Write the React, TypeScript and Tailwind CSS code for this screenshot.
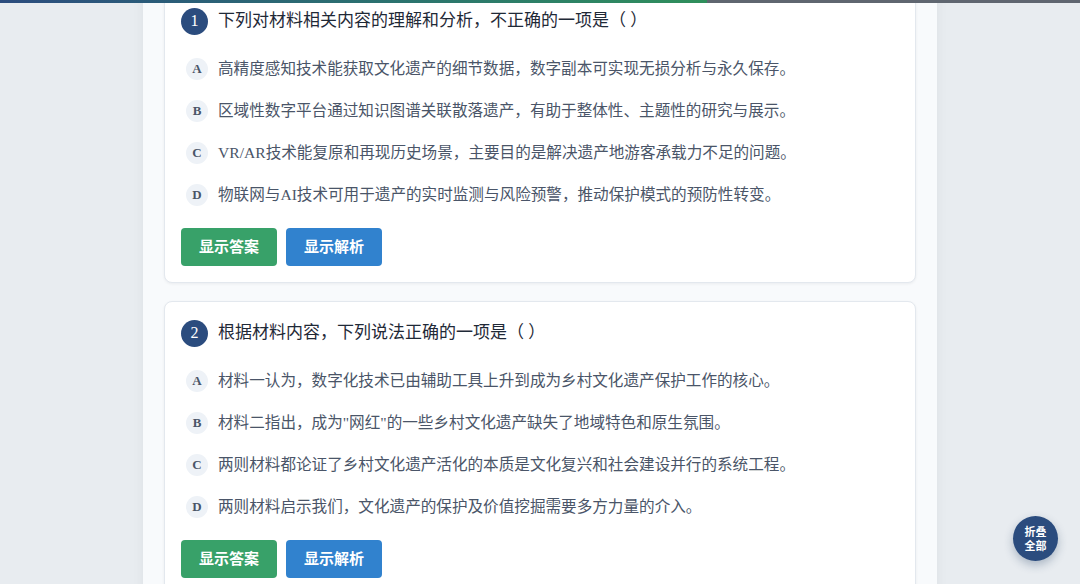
import React from "react";

type Question = {
  no: number;
  title: string;
  options: { key: string; text: string }[];
};

const questions: Question[] = [
  {
    no: 1,
    title: "下列对材料相关内容的理解和分析，不正确的一项是（ ）",
    options: [
      { key: "A", text: "高精度感知技术能获取文化遗产的细节数据，数字副本可实现无损分析与永久保存。" },
      { key: "B", text: "区域性数字平台通过知识图谱关联散落遗产，有助于整体性、主题性的研究与展示。" },
      { key: "C", text: "VR/AR技术能复原和再现历史场景，主要目的是解决遗产地游客承载力不足的问题。" },
      { key: "D", text: "物联网与AI技术可用于遗产的实时监测与风险预警，推动保护模式的预防性转变。" },
    ],
  },
  {
    no: 2,
    title: "根据材料内容，下列说法正确的一项是（ ）",
    options: [
      { key: "A", text: "材料一认为，数字化技术已由辅助工具上升到成为乡村文化遗产保护工作的核心。" },
      { key: "B", text: "材料二指出，成为\"网红\"的一些乡村文化遗产缺失了地域特色和原生氛围。" },
      { key: "C", text: "两则材料都论证了乡村文化遗产活化的本质是文化复兴和社会建设并行的系统工程。" },
      { key: "D", text: "两则材料启示我们，文化遗产的保护及价值挖掘需要多方力量的介入。" },
    ],
  },
];

const serif = "font-['Liberation_Serif','Noto_Sans_CJK_SC',serif]";
const sans = "font-['Liberation_Sans','Noto_Sans_CJK_SC',sans-serif]";

function QuestionCard({ q }: { q: Question }) {
  return (
    <div className="bg-white rounded-lg border border-[#e3e8ee] shadow-[0_1px_3px_rgba(15,23,42,0.06)] p-[16px]">
      <div className="flex items-center gap-[10px] h-[30px]">
        <span className={`w-[27px] h-[27px] rounded-full bg-[#2b4c7e] text-white flex items-center justify-center text-[16px] ${serif}`}>
          {q.no}
        </span>
        <h3 className={`text-[17px] text-[#1f2937] ${serif}`}>{q.title}</h3>
      </div>
      <div className="mt-[12px] flex flex-col">
        {q.options.map((o) => (
          <div key={o.key} className="h-[42px] flex items-center gap-[10px] pl-[5px]">
            <span className={`w-[22px] h-[22px] rounded-full bg-[#eef2f7] text-[#4a5568] flex items-center justify-center text-[13px] font-semibold ${serif}`}>
              {o.key}
            </span>
            <span className={`text-[15.6px] text-[#4a5568] ${serif}`}>{o.text}</span>
          </div>
        ))}
      </div>
      <div className={`mt-[12px] flex gap-[9px] ${sans}`}>
        <button className="h-[38px] w-[96px] rounded bg-[#38a169] text-white text-[15px] font-bold">
          显示答案
        </button>
        <button className="h-[38px] w-[96px] rounded bg-[#3182ce] text-white text-[15px] font-bold">
          显示解析
        </button>
      </div>
    </div>
  );
}

export default function App() {
  return (
    <div className="h-[584px] overflow-hidden bg-[#e8ecf0] relative">
      <div className="absolute top-0 left-0 right-0 h-[3px] bg-[#5f6670] z-10">
        <div className="h-full w-[65.5%] bg-gradient-to-r from-[#2b4c7e] to-[#2f8f5b]" />
      </div>
      <div className="mx-auto w-[794px] min-h-full bg-[#f8fafc] shadow-[0_0_12px_rgba(15,23,42,0.05)] px-[21px]">
        <div className="-mt-[11px] flex flex-col gap-[18px] pb-8">
          {questions.map((q) => (
            <QuestionCard key={q.no} q={q} />
          ))}
        </div>
      </div>
      <button
        className={`absolute right-[22px] top-[516px] w-[45px] h-[45px] rounded-full bg-[#2b4c7e] text-white text-[11px] font-bold leading-[14px] shadow-[0_4px_10px_rgba(30,58,95,0.3)] ${sans}`}
      >
        折叠
        <br />
        全部
      </button>
    </div>
  );
}
